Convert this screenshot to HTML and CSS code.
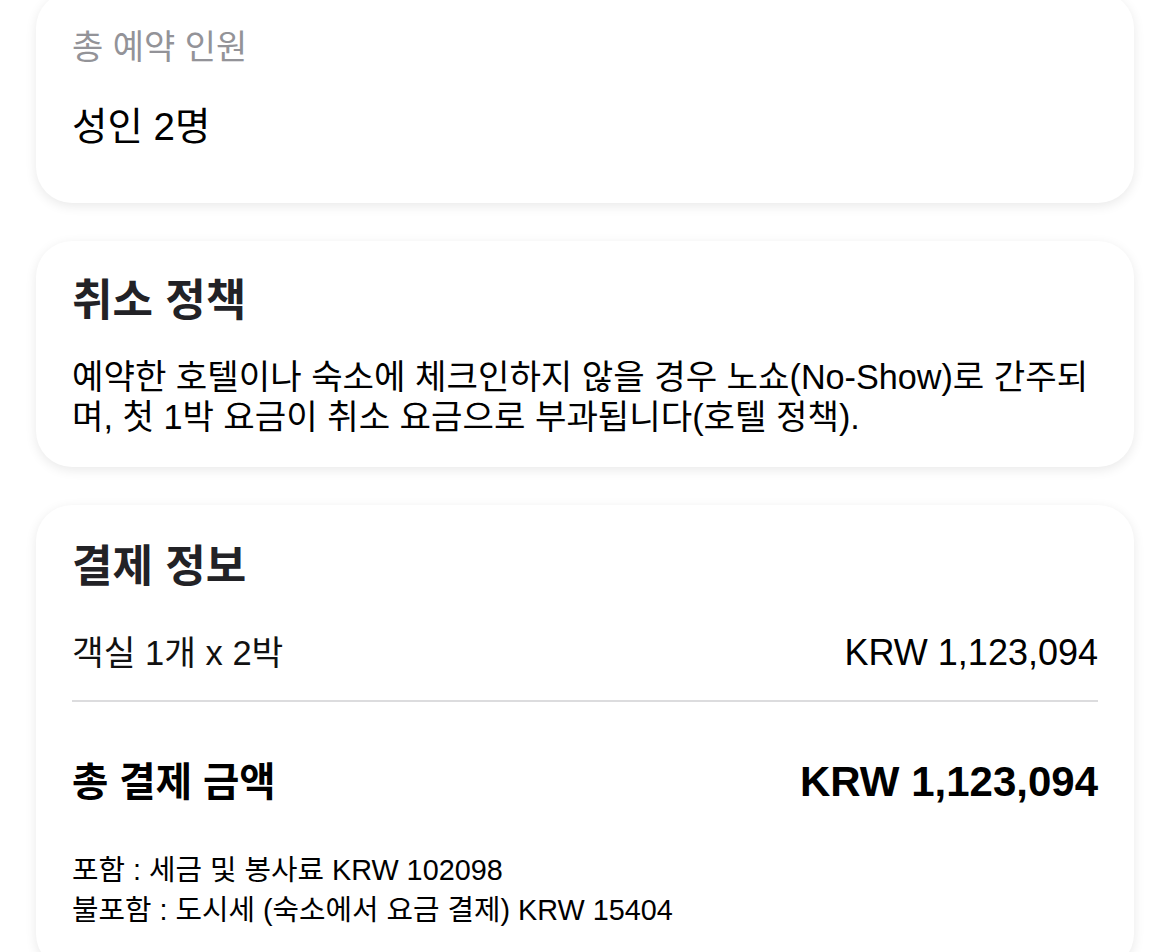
FILE: index.html
```html
<!DOCTYPE html>
<html lang="ko">
<head>
<meta charset="utf-8">
<title>예약 정보</title>
<link rel="stylesheet" href="styles.css">
</head>
<body>
<main class="page">
  <section class="card card-guests">
    <div class="label">총 예약 인원</div>
    <div class="guest-value">성인 2명</div>
  </section>

  <section class="card card-policy">
    <h2 class="card-title">취소 정책</h2>
    <p class="policy-text">예약한 호텔이나 숙소에 체크인하지 않을 경우 노쇼(No-Show)로 간주되며, 첫 1박 요금이 취소 요금으로 부과됩니다(호텔 정책).</p>
  </section>

  <section class="card card-payment">
    <h2 class="card-title">결제 정보</h2>
    <div class="row">
      <span class="row-label">객실 1개 x 2박</span>
      <span class="row-amount">KRW 1,123,094</span>
    </div>
    <hr class="divider">
    <div class="row total-row">
      <span class="total-label">총 결제 금액</span>
      <span class="total-amount">KRW 1,123,094</span>
    </div>
    <div class="notes">
      <div class="note">포함 : 세금 및 봉사료 KRW 102098</div>
      <div class="note">불포함 : 도시세 (숙소에서 요금 결제) KRW 15404</div>
    </div>
  </section>
</main>
</body>
</html>
```

FILE: styles.css
```css
html, body {
  margin: 0;
  padding: 0;
  background: #ffffff;
}

body {
  font-family: "Liberation Sans", "Noto Sans CJK KR", sans-serif;
  color: #000;
  overflow: hidden;
}

.page {
  display: flex;
  flex-direction: column;
  gap: 38px;
  padding: 0 36px;
}

.card {
  background: #fff;
  border-radius: 36px;
  box-shadow: 0 3px 12px rgba(0, 0, 0, 0.09);
  padding: 35px 36px;
}

.card-guests {
  margin-top: -8px;
  padding-bottom: 53px;
}

.label {
  font-size: 34px;
  line-height: 40px;
  color: #939398;
}

.guest-value {
  margin-top: 37px;
  font-size: 38.5px;
  line-height: 46px;
  color: #000;
}

.card-title {
  margin: 0;
  font-size: 44px;
  line-height: 50px;
  font-weight: 700;
  color: #222226;
}

.card-policy {
  padding-bottom: 30px;
}

.policy-text {
  margin: 31px 0 0;
  font-size: 34.2px;
  line-height: 40px;
  color: #000;
}

.card-payment {
  padding-top: 37px;
  padding-bottom: 40px;
}

.row {
  display: flex;
  justify-content: space-between;
  align-items: baseline;
  margin-top: 38px;
  line-height: 46px;
}

.row-label {
  font-size: 34.5px;
  color: #111;
}

.row-amount {
  font-size: 36px;
  color: #000;
}

.divider {
  margin: 24px 0 0;
  border: 0;
  height: 2px;
  background: #dcdcde;
}

.total-row {
  margin-top: 55px;
  line-height: 50px;
}

.total-label {
  font-size: 39.5px;
  font-weight: 700;
  color: #000;
}

.total-amount {
  font-size: 42px;
  font-weight: 700;
  color: #000;
}

.notes {
  margin-top: 43px;
  display: flex;
  flex-direction: column;
}

.note {
  font-size: 28.8px;
  line-height: 40px;
  color: #000;
}
```
